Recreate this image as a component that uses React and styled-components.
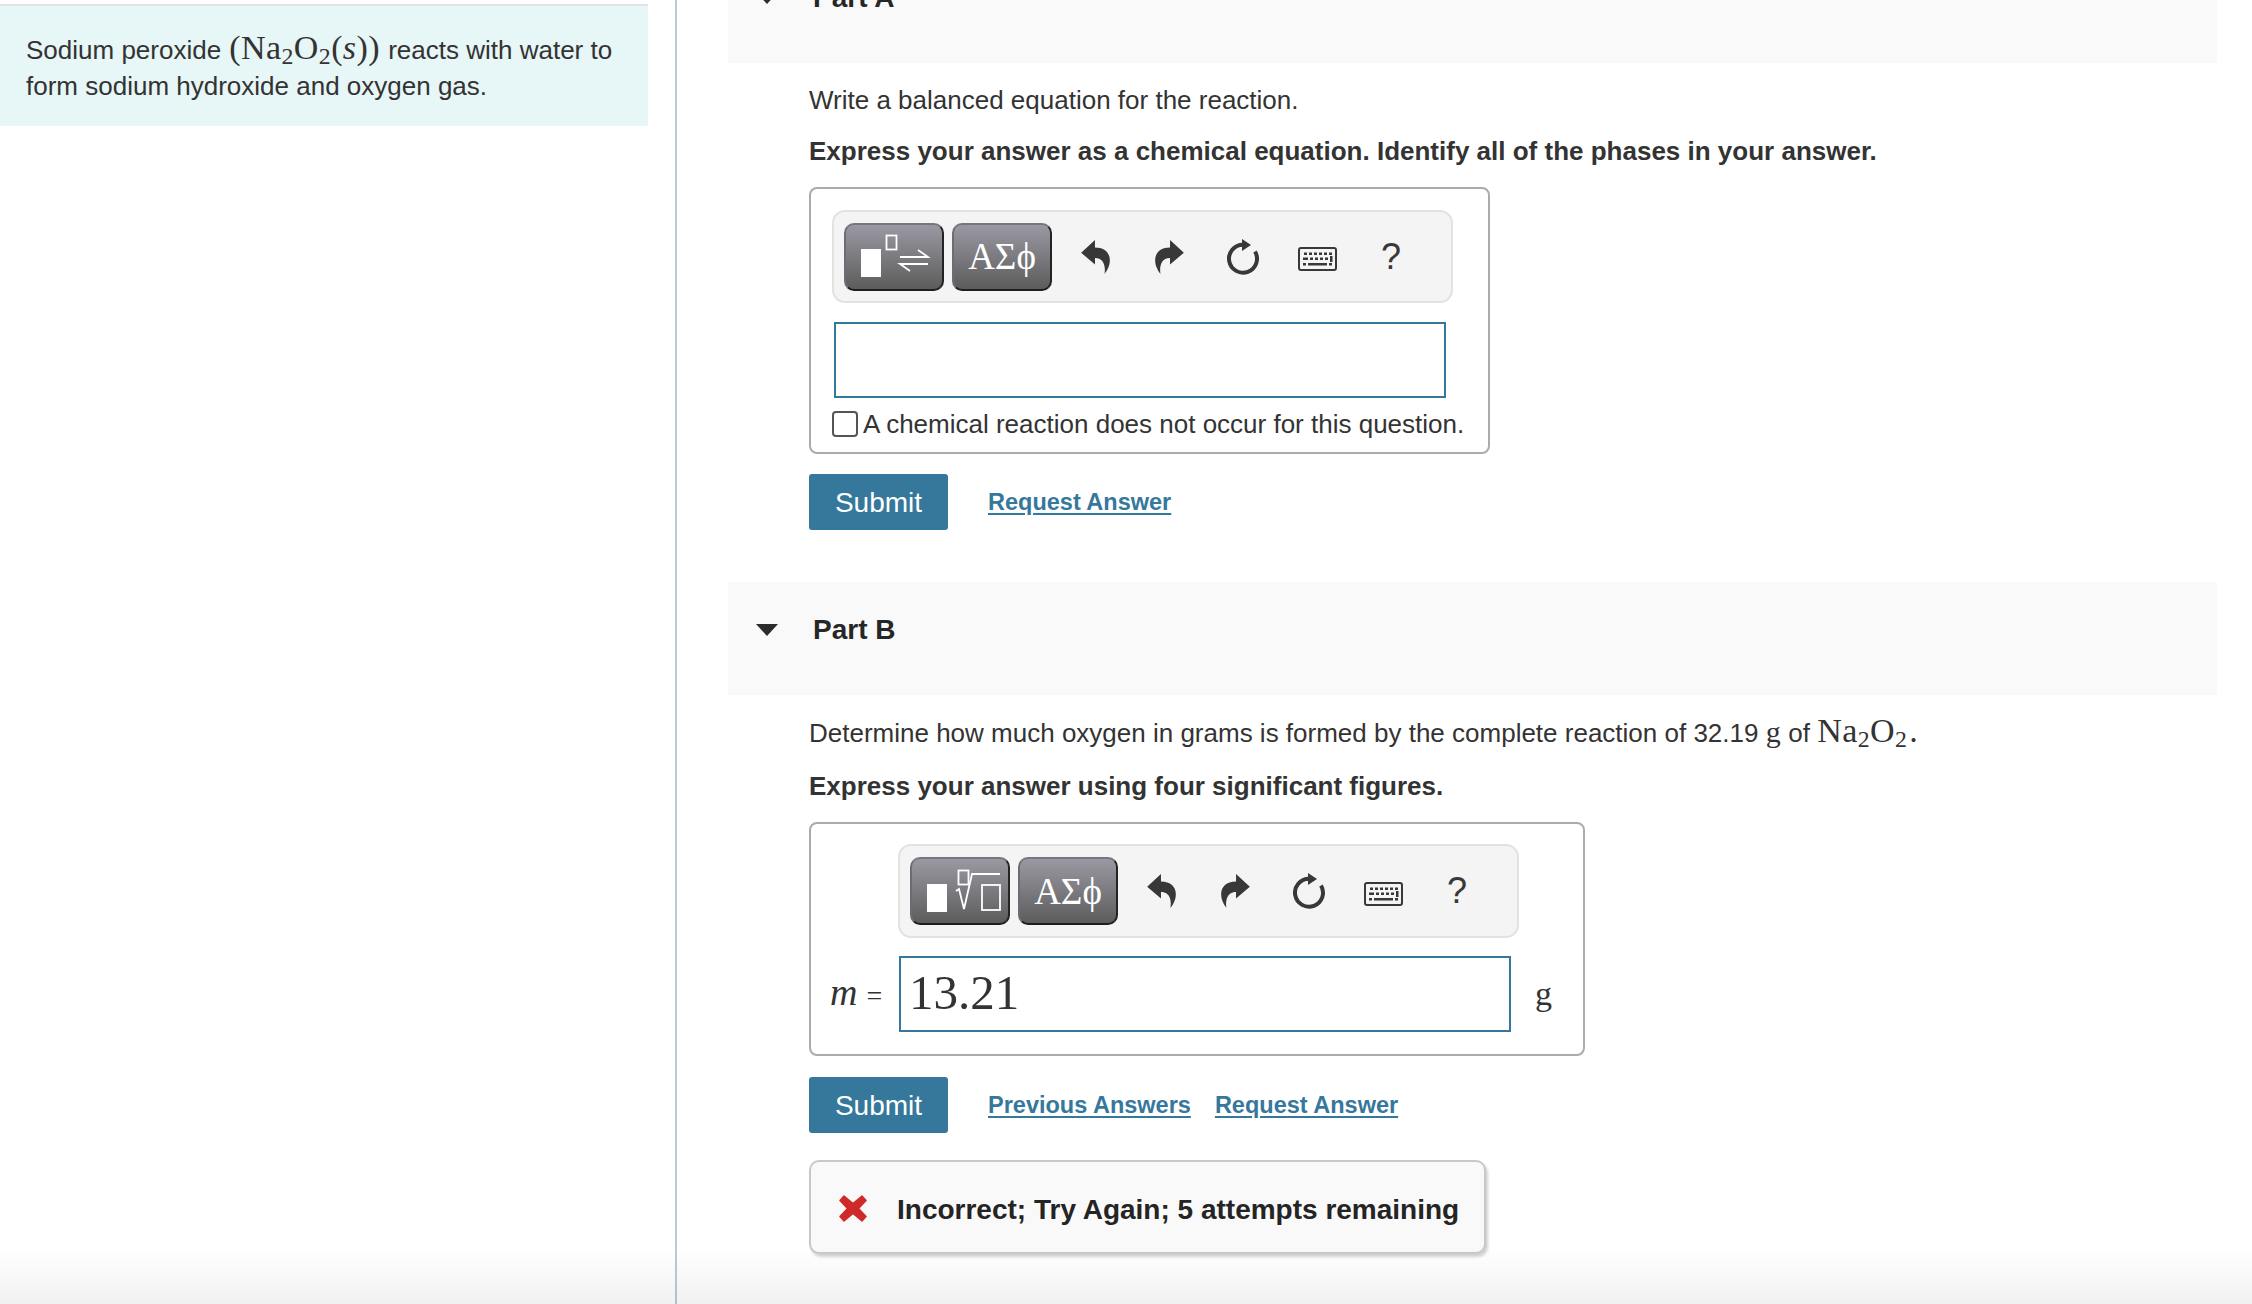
import styled, { createGlobalStyle } from 'styled-components';

const GlobalStyle = createGlobalStyle`
  html, body {
    margin: 0;
    padding: 0;
    background: #fff;
  }
  body {
    font-family: "Liberation Sans", Arial, sans-serif;
    color: #333;
  }
  * {
    box-sizing: border-box;
  }
`;

const Page = styled.div`
  position: relative;
  display: flex;
  width: 2252px;
  height: 1304px;
  overflow: hidden;
  font-size: 26px;
  line-height: 36px;
`;

const BottomFade = styled.div`
  position: absolute;
  left: 0;
  right: 0;
  bottom: 0;
  height: 56px;
  background: linear-gradient(to bottom, rgba(0, 0, 0, 0), rgba(0, 0, 0, 0.055));
  pointer-events: none;
`;

const Sidebar = styled.aside`
  flex: none;
  width: 677px;
  padding-top: 4px;
  border-right: 2px solid #bcc9dc;
`;

const Intro = styled.div`
  width: 648px;
  height: 122px;
  padding: 25px 0 0 26px;
  background: #e7f6f6;
  border-top: 2px solid #dfe3e8;
`;

const Main = styled.main`
  flex: none;
  width: 1489px;
  margin: -50px 0 0 51px;
`;

const PartHeader = styled.div`
  display: flex;
  align-items: center;
  height: 113px;
  padding: 0 0 18px 28px;
  background: #f9f9f9;
  margin-top: ${(p) => p.$top || 0}px;
`;

const Caret = styled.span`
  width: 0;
  height: 0;
  margin-right: 35px;
  border-left: 11px solid transparent;
  border-right: 11px solid transparent;
  border-top: 12px solid #2b2b2b;
`;

const PartTitle = styled.h2`
  margin: 0;
  font-size: 28px;
  font-weight: 700;
  color: #262626;
`;

const PartBody = styled.div`
  padding-left: 81px;
`;

const Prompt = styled.p`
  margin: ${(p) => p.$top}px 0 0;
`;

const Instruction = styled.p`
  margin: ${(p) => p.$top}px 0 18px;
  font-weight: 700;
`;

const Math = styled.span`
  font-family: "Liberation Serif", "Times New Roman", serif;
  font-size: ${(p) => p.$size || 34}px;
  line-height: 1;
  letter-spacing: ${(p) => p.$spacing || 0.4}px;
  margin: 0 ${(p) => p.$side || 0}px;
  color: #333;
`;

const MathItalic = styled.i`
  font-family: "Liberation Serif", "Times New Roman", serif;
`;

const Sub = styled.sub`
  font-size: 0.7em;
  line-height: 0;
  vertical-align: -0.2em;
`;

const Period = styled.span`
  margin-left: 2px;
`;

const AnswerBox = styled.div`
  width: ${(p) => p.$width}px;
  height: ${(p) => p.$height}px;
  padding: ${(p) => p.$pad};
  border: 2px solid #ababab;
  border-radius: 8px;
  background: #fff;
`;

const Toolbar = styled.div`
  display: flex;
  align-items: center;
  width: ${(p) => p.$width}px;
  height: ${(p) => p.$height}px;
  margin-left: ${(p) => p.$left || 0}px;
  padding-left: 10px;
  background: #f4f4f4;
  border: 2px solid #e2e2e2;
  border-radius: 13px;
`;

const TemplateButton = styled.button`
  display: flex;
  align-items: center;
  justify-content: center;
  flex: none;
  width: 100px;
  height: 68px;
  margin-right: 8px;
  padding: 0;
  color: #fff;
  background: linear-gradient(to bottom, #9a99a3, #5c5c5c);
  border: 2px solid #6d6c74;
  border-top-color: #77767e;
  border-bottom-color: #1d1d1d;
  border-right-color: #232323;
  border-radius: 10px;
  font-family: "Liberation Serif", serif;
  font-size: 37px;
  line-height: 1;
`;

const ToolSlots = styled.div`
  display: flex;
  margin-left: -2px;
`;

const ToolSlot = styled.span`
  display: flex;
  align-items: center;
  justify-content: center;
  width: 74px;
  height: 44px;
  color: #383838;
  font-size: 36px;
`;

const Flip = styled.svg`
  transform: ${(p) => (p.$flip ? 'scaleX(-1)' : 'none')};
`;

const KeyboardSvg = styled.svg`
  margin-top: 5px;
`;

const EquationInput = styled.div`
  width: 612px;
  height: 76px;
  margin: 19px 0 8px 2px;
  border: 2px solid #36789c;
`;

const CheckRow = styled.label`
  display: flex;
  align-items: center;
  gap: 5px;
  white-space: nowrap;
`;

const CheckBox = styled.span`
  flex: none;
  width: 26px;
  height: 26px;
  border: 2px solid #555;
  border-radius: 4px;
  background: #fff;
`;

const ValueRow = styled.div`
  display: flex;
  align-items: center;
  margin-top: 18px;
`;

const VarLabel = styled.span`
  display: flex;
  align-items: baseline;
  gap: 9px;
  width: 70px;
  padding-left: 1px;
  font-family: "Liberation Serif", serif;
  font-size: 28px;
  white-space: nowrap;
`;

const VarName = styled.i`
  font-size: 38px;
`;

const ValueInput = styled.div`
  width: 612px;
  height: 76px;
  padding-left: 8px;
  border: 2px solid #36789c;
  font-family: "Liberation Serif", serif;
  font-size: 49px;
  line-height: 70px;
  color: #333;
`;

const UnitLabel = styled.span`
  margin-left: 24px;
  font-family: "Liberation Serif", serif;
  font-size: 34px;
`;

const Actions = styled.div`
  display: flex;
  align-items: center;
  margin-top: ${(p) => p.$top}px;
`;

const SubmitButton = styled.button`
  width: 139px;
  height: 56px;
  margin-right: 40px;
  padding: 2px 0 0;
  border: none;
  border-radius: 3px;
  background: #36789c;
  color: #fff;
  font-family: "Liberation Sans", Arial, sans-serif;
  font-size: 28px;
`;

const ActionLink = styled.a`
  margin-right: 24px;
  color: #36789c;
  font-size: 23.5px;
  font-weight: 700;
  text-decoration: underline;
  text-underline-offset: 3px;
`;

const Feedback = styled.div`
  display: flex;
  align-items: center;
  gap: 30px;
  width: 677px;
  height: 94px;
  margin-top: 27px;
  padding: 6px 0 0 28px;
  background: #f9f9f9;
  border: 2px solid #c8c8c8;
  border-radius: 10px;
  box-shadow: 2px 3px 3px rgba(0, 0, 0, 0.18);
`;

const CrossSvg = styled.svg`
  flex: none;
  margin-top: -4px;
`;

const FeedbackText = styled.strong`
  font-size: 28px;
  color: #242424;
`;

const UndoIcon = ({ flip }) => (
  <Flip $flip={flip} width="29" height="34" viewBox="0 0 27 32">
    <path
      fill="#383838"
      d="M0 12 L13 0 V7 C22 7 27 12 27 19 C27 25 24 29 22 32 C23 26 22 17 13 17 V23 Z"
    />
  </Flip>
);

const ReloadIcon = () => (
  <svg width="33" height="36" viewBox="0 0 33 36">
    <path
      fill="none"
      stroke="#383838"
      strokeWidth="4"
      d="M28 12.5 A14 14 0 1 1 16 5.7"
    />
    <path fill="#383838" d="M15 0 L24 6 L15 12 Z" />
  </svg>
);

const KeyboardIcon = () => {
  const top = [6, 11, 16, 21, 26, 31];
  const mid = [12, 17, 22, 27];
  return (
    <KeyboardSvg width="39" height="24" viewBox="0 0 39 24">
      <rect x="1" y="1" width="37" height="22" rx="2" fill="none" stroke="#383838" strokeWidth="2" />
      {top.map((x) => (
        <rect key={x} x={x} y="5.5" width="3" height="2.5" fill="#383838" />
      ))}
      <rect x="5" y="10.5" width="5" height="2.5" fill="#383838" />
      {mid.map((x) => (
        <rect key={x} x={x} y="10.5" width="3" height="2.5" fill="#383838" />
      ))}
      <rect x="32" y="9" width="2.5" height="6" fill="#383838" />
      <rect x="5" y="16" width="3" height="2.5" fill="#383838" />
      <rect x="10" y="16" width="19" height="2.5" fill="#383838" />
      <rect x="31" y="16" width="3" height="2.5" fill="#383838" />
    </KeyboardSvg>
  );
};

const ArrowsTemplate = () => (
  <svg width="96" height="64" viewBox="0 0 96 64">
    <rect x="15" y="24" width="20" height="28" fill="#fff" />
    <rect x="40.5" y="10.5" width="10" height="14" fill="none" stroke="#fff" strokeWidth="1.8" />
    <path
      fill="none"
      stroke="#fff"
      strokeWidth="1.8"
      d="M54 32 H82 L72 25 M82 39 H54 L64 46"
    />
  </svg>
);

const RadicalTemplate = () => (
  <svg width="96" height="64" viewBox="0 0 96 64">
    <rect x="15" y="25" width="20" height="28" fill="#fff" />
    <rect x="46.5" y="11.5" width="10" height="14" fill="none" stroke="#fff" strokeWidth="1.8" />
    <rect x="70" y="26" width="18" height="25" fill="none" stroke="#fff" strokeWidth="1.8" />
    <path fill="none" stroke="#fff" strokeWidth="1.8" d="M44 32 L47 30 L52 50 L60 15 H88" />
  </svg>
);

const EditorToolbar = ({ width, height, left, template }) => (
  <Toolbar $width={width} $height={height} $left={left}>
    <TemplateButton>{template}</TemplateButton>
    <TemplateButton>ΑΣϕ</TemplateButton>
    <ToolSlots>
      <ToolSlot><UndoIcon /></ToolSlot>
      <ToolSlot><UndoIcon flip /></ToolSlot>
      <ToolSlot><ReloadIcon /></ToolSlot>
      <ToolSlot><KeyboardIcon /></ToolSlot>
      <ToolSlot>?</ToolSlot>
    </ToolSlots>
  </Toolbar>
);

const App = () => (
  <Page>
    <GlobalStyle />
    <Sidebar>
      <Intro>
        Sodium peroxide{' '}
        <Math $side={1}>
          (Na<Sub>2</Sub>O<Sub>2</Sub>(<MathItalic>s</MathItalic>))
        </Math>{' '}
        reacts with water to
        <br />
        form sodium hydroxide and oxygen gas.
      </Intro>
    </Sidebar>
    <Main>
      <PartHeader>
        <Caret />
        <PartTitle>Part A</PartTitle>
      </PartHeader>
      <PartBody>
        <Prompt $top={19}>Write a balanced equation for the reaction.</Prompt>
        <Instruction $top={15}>
          Express your answer as a chemical equation. Identify all of the phases in your answer.
        </Instruction>
        <AnswerBox $width={681} $height={267} $pad="21px 0 0 21px">
          <EditorToolbar width={621} height={93} template={<ArrowsTemplate />} />
          <EquationInput />
          <CheckRow>
            <CheckBox />A chemical reaction does not occur for this question.
          </CheckRow>
        </AnswerBox>
        <Actions $top={20}>
          <SubmitButton>Submit</SubmitButton>
          <ActionLink>Request Answer</ActionLink>
        </Actions>
      </PartBody>
      <PartHeader $top={52}>
        <Caret />
        <PartTitle>Part B</PartTitle>
      </PartHeader>
      <PartBody>
        <Prompt $top={19}>
          Determine how much oxygen in grams is formed by the complete reaction of 32.19{' '}
          <Math $size={30}>g</Math> of{' '}
          <Math>
            Na<Sub>2</Sub>O<Sub>2</Sub>
            <Period>.</Period>
          </Math>
        </Prompt>
        <Instruction $top={17}>Express your answer using four significant figures.</Instruction>
        <AnswerBox $width={776} $height={234} $pad="20px 0 0 18px">
          <EditorToolbar width={621} height={94} left={69} template={<RadicalTemplate />} />
          <ValueRow>
            <VarLabel>
              <VarName>m</VarName> =
            </VarLabel>
            <ValueInput>13.21</ValueInput>
            <UnitLabel>g</UnitLabel>
          </ValueRow>
        </AnswerBox>
        <Actions $top={21}>
          <SubmitButton>Submit</SubmitButton>
          <ActionLink>Previous Answers</ActionLink>
          <ActionLink>Request Answer</ActionLink>
        </Actions>
        <Feedback>
          <CrossSvg width="28" height="27" viewBox="0 0 28 27">
            <path
              fill="#cf2a2a"
              stroke="#cf2a2a"
              strokeWidth="1.5"
              strokeLinejoin="round"
              d="M5 1 L14 8.5 L23 1 L27 5.5 L19.5 13.5 L27 21.5 L23 26 L14 18.5 L5 26 L1 21.5 L8.5 13.5 L1 5.5 Z"
            />
          </CrossSvg>
          <FeedbackText>Incorrect; Try Again; 5 attempts remaining</FeedbackText>
        </Feedback>
      </PartBody>
    </Main>
    <BottomFade />
  </Page>
);

export default App;
